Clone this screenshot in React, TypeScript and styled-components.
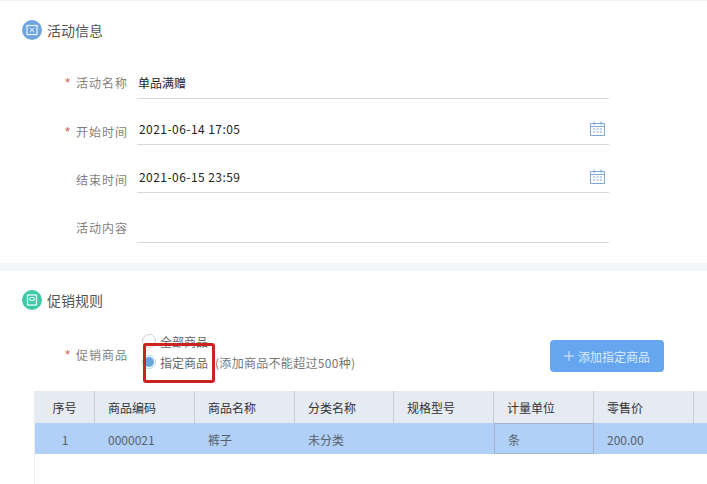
import React from "react";
import styled, { createGlobalStyle } from "styled-components";

const Global = createGlobalStyle`
  html, body { margin: 0; padding: 0; background: #fff; }
  body { font-family: "Noto Sans CJK SC", "Liberation Sans", sans-serif; overflow: hidden; }
`;

const Page = styled.div`
  width: 707px;
  height: 484px;
  overflow: hidden;
  background: #fff;
  border-top: 1px solid #f3f4f6;
  box-sizing: border-box;
`;

const InfoSection = styled.section`
  height: 270px;
  padding: 19px 0 0 22px;
  box-sizing: border-box;
  border-bottom: 8px solid #f5f6fa;
`;

const RuleSection = styled.section`
  padding: 19px 0 0 0;
`;

const SectionHead = styled.div<{ $inset?: boolean }>`
  display: flex;
  align-items: center;
  gap: 5px;
  height: 20px;
  padding-left: ${(p) => (p.$inset ? "22px" : "0")};
  font-size: 14px;
  color: #555;
`;

const Badge = styled.span<{ $color: string }>`
  width: 20px;
  height: 20px;
  border-radius: 50%;
  background: ${(p) => p.$color};
  display: flex;
  align-items: center;
  justify-content: center;
  flex: none;
`;

const Form = styled.div`
  margin-top: 29px;
  display: flex;
  flex-direction: column;
  width: 587px;
`;

const Row = styled.div<{ $h: number }>`
  display: flex;
  align-items: flex-end;
  height: ${(p) => p.$h}px;
`;

const Label = styled.div<{ $drop?: number }>`
  width: 106px;
  flex: none;
  height: 30px;
  margin-bottom: ${(p) => -(p.$drop ?? 0)}px;
  display: flex;
  align-items: center;
  justify-content: flex-end;
  gap: 5px;
  font-size: 12px;
  letter-spacing: 1px;
  color: #7f7f7f;
  box-sizing: border-box;
`;

const Star = styled.span`
  color: #cf5a55;
  font-size: 13px;
  font-family: "Liberation Sans", sans-serif;
`;

const Field = styled.div`
  margin-left: 9px;
  flex: 1;
  height: 30px;
  padding: 0 0 3px 1px;
  display: flex;
  align-items: center;
  justify-content: space-between;
  border-bottom: 1px solid #d9d9d9;
  font-size: 12px;
  color: #222;
  box-sizing: border-box;
`;

const DateText = styled.span`
  font-size: 12px;
  letter-spacing: 0.45px;
  padding-left: 1px;
`;

const CalBox = styled.span`
  margin-right: 4px;
  display: flex;
`;

const GoodsRow = styled.div`
  position: relative;
  margin-top: 24px;
  height: 57px;
  display: flex;
  padding-left: 22px;
`;

const GoodsLabel = styled(Label)`
  margin-top: 5px;
`;

const RadioColumn = styled.div`
  margin-left: 14px;
  display: flex;
  flex-direction: column;
  gap: 7px;
  width: 408px;
`;

const RadioLine = styled.div`
  display: flex;
  align-items: center;
  height: 14px;
  font-size: 12px;
  color: #666;
  white-space: nowrap;
`;

const RadioDot = styled.span<{ $on?: boolean }>`
  width: 14px;
  height: 14px;
  margin-right: 4px;
  border-radius: 50%;
  border: 1px solid ${(p) => (p.$on ? "#bcd3f0" : "#cfcfcf")};
  box-sizing: border-box;
  display: flex;
  align-items: center;
  justify-content: center;
  background: #fff;
  &::after {
    content: "";
    display: ${(p) => (p.$on ? "block" : "none")};
    width: 10px;
    height: 10px;
    border-radius: 50%;
    background: #6ea3e8;
  }
`;

const Hint = styled.span`
  margin-left: 7px;
  letter-spacing: 0.3px;
  color: #777;
`;

const AddButton = styled.button`
  width: 114px;
  height: 32px;
  margin-top: 6px;
  border: 0;
  border-radius: 4px;
  background: #66a6f1;
  color: #dcebfb;
  font: inherit;
  font-size: 12px;
  display: flex;
  align-items: center;
  justify-content: center;
  gap: 4px;
  padding: 0;
`;

const RedMark = styled.div`
  position: absolute;
  left: 143px;
  top: 9px;
  width: 72px;
  height: 40px;
  box-sizing: border-box;
  border: 3px solid #c9241f;
  border-radius: 3px;
  pointer-events: none;
`;

const TableWrap = styled.div`
  margin-left: 34px;
  height: 100px;
  border-left: 1px solid #eeeeee;
`;

const TableRow = styled.div`
  display: grid;
  grid-template-columns: 60px 100px 100px 99px 100px 100px 100px 13px;
`;

const HeadCell = styled.div<{ $center?: boolean }>`
  height: 32px;
  display: flex;
  align-items: center;
  justify-content: ${(p) => (p.$center ? "center" : "flex-start")};
  padding-left: ${(p) => (p.$center ? "0" : "13px")};
  background: #e6eaf3;
  border-right: 1px solid #c9ccd3;
  box-sizing: border-box;
  font-size: 12px;
  color: #333;
  white-space: nowrap;
  &:last-child { border-right: 0; }
`;

const BodyCell = styled.div<{ $center?: boolean; $active?: boolean }>`
  height: 31px;
  padding-top: 1px;
  display: flex;
  align-items: center;
  justify-content: ${(p) => (p.$center ? "center" : "flex-start")};
  padding-left: ${(p) => (p.$center ? "0" : "13px")};
  background: #b0d0f8;
  box-sizing: border-box;
  font-size: 12px;
  color: #58606b;
  ${(p) => (p.$active ? "border: 1px solid #a3b4cb;" : "")}
`;

const CalendarIcon = () => (
  <svg width="15" height="15" viewBox="0 0 15 15" fill="none" stroke="#7fa8d2" strokeWidth="1">
    <path d="M.5 2.5h14v12H.5z" />
    <path d="M.5 5.5h14" />
    <path d="M4 .5v3.5M11 .5v3.5" />
    <path d="M3 8h2.2M6.4 8h2.2M9.8 8h2.2M3 11h2.2M6.4 11h2.2M9.8 11h2.2" />
  </svg>
);

const PlusIcon = () => (
  <svg width="10" height="10" viewBox="0 0 10 10" fill="none" stroke="#dcebfb" strokeWidth="1">
    <path d="M5 0v10M0 5h10" />
  </svg>
);

const BlueGlyph = () => (
  <svg width="12" height="12" viewBox="0 0 12 12" fill="none" stroke="#e6f0fa" strokeWidth="1.3">
    <rect x="1" y="1.5" width="10" height="9" />
    <path d="M4 4l4 4M8 4L4 8" strokeWidth="1" />
  </svg>
);

const GreenGlyph = () => (
  <svg width="12" height="12" viewBox="0 0 12 12" fill="none" stroke="#e6faf5" strokeWidth="1.3">
    <rect x="1.5" y="1" width="9" height="10" />
    <path d="M4 3.5h4v3H4z" strokeWidth="1" />
  </svg>
);

const heads = ["序号", "商品编码", "商品名称", "分类名称", "规格型号", "计量单位", "零售价", ""];

export default function App() {
  return (
    <Page>
      <Global />
      <InfoSection>
        <SectionHead>
          <Badge $color="#6ea5df"><BlueGlyph /></Badge>
          活动信息
        </SectionHead>
        <Form>
          <Row $h={30}>
            <Label $drop={-2}><Star>*</Star>活动名称</Label>
            <Field>单品满赠</Field>
          </Row>
          <Row $h={46}>
            <Label $drop={1}><Star>*</Star>开始时间</Label>
            <Field><DateText>2021-06-14 17:05</DateText><CalBox><CalendarIcon /></CalBox></Field>
          </Row>
          <Row $h={48}>
            <Label $drop={1}>结束时间</Label>
            <Field><DateText>2021-06-15 23:59</DateText><CalBox><CalendarIcon /></CalBox></Field>
          </Row>
          <Row $h={50}>
            <Label $drop={-1}>活动内容</Label>
            <Field />
          </Row>
        </Form>
      </InfoSection>
      <RuleSection>
        <SectionHead $inset>
          <Badge $color="#3ec9a7"><GreenGlyph /></Badge>
          促销规则
        </SectionHead>
        <GoodsRow>
          <GoodsLabel><Star>*</Star>促销商品</GoodsLabel>
          <RadioColumn>
            <RadioLine><RadioDot />全部商品</RadioLine>
            <RadioLine><RadioDot $on />指定商品<Hint>(添加商品不能超过500种)</Hint></RadioLine>
          </RadioColumn>
          <AddButton><PlusIcon />添加指定商品</AddButton>
          <RedMark />
        </GoodsRow>
        <TableWrap>
          <TableRow>
            {heads.map((h, i) => (
              <HeadCell key={i} $center={i === 0}>{h}</HeadCell>
            ))}
          </TableRow>
          <TableRow>
            <BodyCell $center>1</BodyCell>
            <BodyCell>0000021</BodyCell>
            <BodyCell>裤子</BodyCell>
            <BodyCell>未分类</BodyCell>
            <BodyCell />
            <BodyCell $active>条</BodyCell>
            <BodyCell>200.00</BodyCell>
            <BodyCell />
          </TableRow>
        </TableWrap>
      </RuleSection>
    </Page>
  );
}
